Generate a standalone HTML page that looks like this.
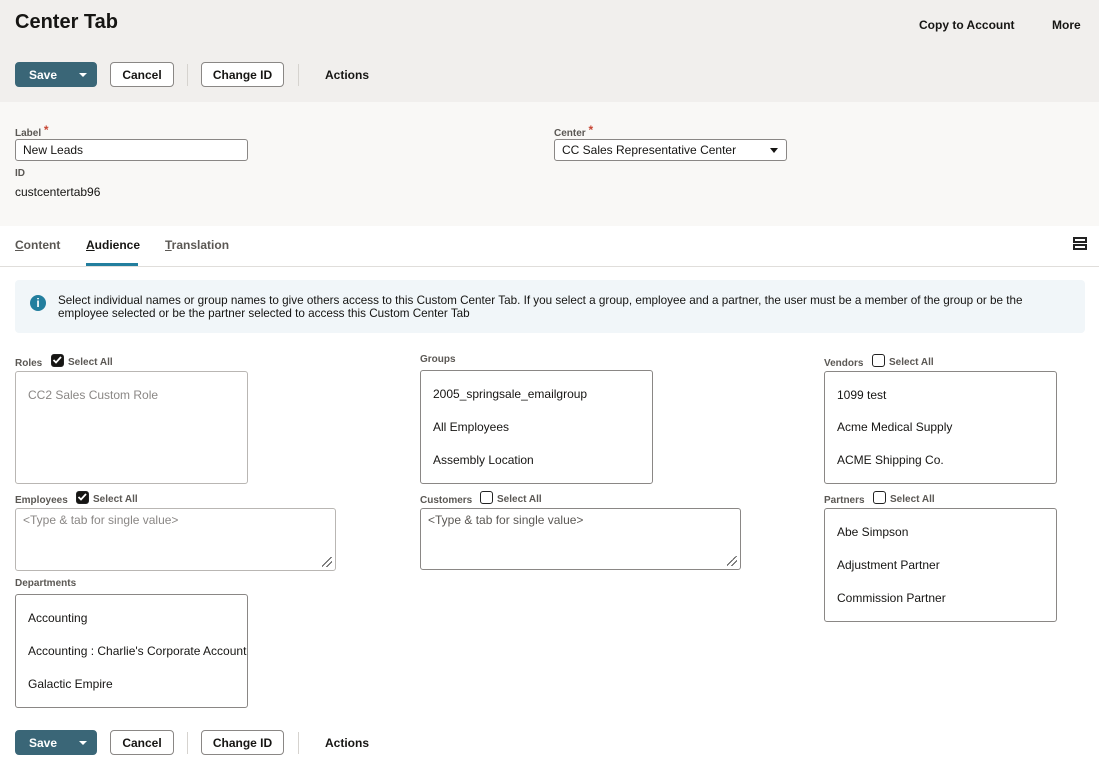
<!DOCTYPE html>
<html><head><style>
*{box-sizing:border-box;margin:0;padding:0}
body{width:1099px;height:764px;position:relative;font-family:"Liberation Sans",Arial,sans-serif;color:#161513;background:#fff;overflow:hidden}
.a{position:absolute}
.hdr{left:0;top:0;width:1099px;height:102px;background:#f1efed}
.frm{left:0;top:102px;width:1099px;height:124px;background:#f9f8f6}
.btn{position:absolute;height:25px;border:1px solid #8a8785;border-radius:4px;background:#fff;font-size:12px;font-weight:bold;display:flex;align-items:center;justify-content:center;color:#161513}
.save{background:#3a6677;border-color:#3a6677;color:#fff;justify-content:flex-start;padding-left:13px}
.div{position:absolute;width:1px;height:22px;background:#d6d3cf}
.lbl{position:absolute;font-size:10px;color:#5b5854;font-weight:bold}
.box{position:absolute;border:1px solid #b9b6b3;border-radius:3px;background:#fff;font-size:12px}
.box div{position:absolute;left:12px}
.cb{display:inline-block;width:13px;height:13px;border:1.5px solid #222;border-radius:3px;vertical-align:-2px;margin-right:4px;background:#fff}
.cb.on{background:#161513;position:relative}
.sa{position:absolute;font-size:10px;font-weight:bold;color:#5b5854}
.ta{position:absolute;border:1px solid #b9b6b3;border-radius:3px;background:#fff;font-size:12px;color:#8a8785;padding:4px 7px}
.grip{position:absolute;right:3px;bottom:3px;width:10px;height:10px;background:linear-gradient(135deg,transparent 45%,#555 45%,#555 52%,transparent 52%,transparent 70%,#555 70%,#555 77%,transparent 77%)}
</style></head><body>
<div class="a hdr"></div><div class="a frm"></div>
<div class="a" style="left:15px;top:11px;font-size:20px;font-weight:bold">Center Tab</div>
<div class="a" style="left:919px;top:18px;font-size:12px;font-weight:bold">Copy to Account</div>
<div class="a" style="left:1052px;top:18px;font-size:12px;font-weight:bold">More</div>

<div class="btn save" style="left:15px;top:62px;width:82px">Save<span style="position:absolute;left:63px;top:10px;border-left:4px solid transparent;border-right:4px solid transparent;border-top:4px solid #fff"></span></div>
<div class="btn" style="left:110px;top:62px;width:64px">Cancel</div>
<div class="div" style="left:187px;top:64px"></div>
<div class="btn" style="left:201px;top:62px;width:83px">Change ID</div>
<div class="div" style="left:298px;top:64px"></div>
<div class="a" style="left:325px;top:68px;font-size:12px;font-weight:bold">Actions</div>

<div class="lbl" style="left:15px;top:123px">Label <span style="color:#c74634;font-size:12px;vertical-align:2px">*</span></div>
<div class="box" style="left:15px;top:139px;width:233px;height:22px;border-color:#8a8785"><div style="left:7px;top:3px">New Leads</div></div>
<div class="lbl" style="left:15px;top:168px">ID</div>
<div class="a" style="left:15px;top:185px;font-size:12px">custcentertab96</div>
<div class="lbl" style="left:554px;top:123px">Center <span style="color:#c74634;font-size:12px;vertical-align:2px">*</span></div>
<div class="box" style="left:554px;top:139px;width:233px;height:22px;border-color:#8a8785"><div style="left:7px;top:3px">CC Sales Representative Center</div><span style="position:absolute;right:8px;top:8px;border-left:4px solid transparent;border-right:4px solid transparent;border-top:5px solid #161513"></span></div>

<div class="a" style="left:15px;top:238px;font-size:12px;color:#5b5854;font-weight:bold"><u>C</u>ontent</div>
<div class="a" style="left:86px;top:238px;font-size:12px;font-weight:bold"><u>A</u>udience</div>
<div class="a" style="left:86px;top:263px;width:52px;height:3px;background:#227e9e"></div>
<div class="a" style="left:165px;top:238px;font-size:12px;color:#5b5854;font-weight:bold"><u>T</u>ranslation</div>
<div class="a" style="left:0;top:266px;width:1099px;height:1px;background:#e0dedb"></div>
<div class="a" style="left:1073px;top:237px;width:14px;height:6px;border:2px solid #222"></div>
<div class="a" style="left:1073px;top:244px;width:14px;height:6px;border:2px solid #222"></div>

<div class="a" style="left:15px;top:280px;width:1070px;height:53px;background:#f1f6f9;border-radius:4px"></div>
<div class="a" style="left:30px;top:295px;width:16px;height:16px;border-radius:50%;background:#227e9e;color:#fff;font-size:12px;font-weight:bold;text-align:center;line-height:16px">i</div>
<div class="a" style="left:58px;top:294px;font-size:11.7px;line-height:13px;width:1010px">Select individual names or group names to give others access to this Custom Center Tab. If you select a group, employee and a partner, the user must be a member of the group or be the employee selected or be the partner selected to access this Custom Center Tab</div>

<div class="lbl" style="left:15px;top:358px">Roles</div>
<div class="sa" style="left:51px;top:354px"><span class="cb on"><svg width="10" height="10" style="position:absolute;left:0;top:0"><path d="M1.5 5l2.5 2.5 5-5.5" stroke="#fff" stroke-width="1.8" fill="none"/></svg></span>Select All</div>
<div class="box" style="left:15px;top:371px;width:233px;height:113px"><div style="top:16px;color:#8a8785">CC2 Sales Custom Role</div></div>

<div class="lbl" style="left:420px;top:354px">Groups</div>
<div class="box" style="left:420px;top:370px;width:233px;height:114px;border-color:#8a8785"><div style="top:16px">2005_springsale_emailgroup</div><div style="top:49px">All Employees</div><div style="top:82px">Assembly Location</div></div>

<div class="lbl" style="left:824px;top:358px">Vendors</div>
<div class="sa" style="left:872px;top:354px"><span class="cb"></span>Select All</div>
<div class="box" style="left:824px;top:371px;width:233px;height:113px;border-color:#8a8785"><div style="top:16px">1099 test</div><div style="top:48px">Acme Medical Supply</div><div style="top:81px">ACME Shipping Co.</div></div>

<div class="lbl" style="left:15px;top:495px">Employees</div>
<div class="sa" style="left:76px;top:491px"><span class="cb on"><svg width="10" height="10" style="position:absolute;left:0;top:0"><path d="M1.5 5l2.5 2.5 5-5.5" stroke="#fff" stroke-width="1.8" fill="none"/></svg></span>Select All</div>
<div class="ta" style="left:15px;top:508px;width:321px;height:63px">&lt;Type &amp; tab for single value&gt;<span class="grip"></span></div>

<div class="lbl" style="left:420px;top:495px">Customers</div>
<div class="sa" style="left:480px;top:491px"><span class="cb"></span>Select All</div>
<div class="ta" style="left:420px;top:508px;width:321px;height:62px;border-color:#8a8785;color:#5b5854">&lt;Type &amp; tab for single value&gt;<span class="grip"></span></div>

<div class="lbl" style="left:824px;top:495px">Partners</div>
<div class="sa" style="left:873px;top:491px"><span class="cb"></span>Select All</div>
<div class="box" style="left:824px;top:508px;width:233px;height:114px;border-color:#8a8785"><div style="top:16px">Abe Simpson</div><div style="top:49px">Adjustment Partner</div><div style="top:82px">Commission Partner</div></div>

<div class="lbl" style="left:15px;top:578px">Departments</div>
<div class="box" style="left:15px;top:594px;width:233px;height:114px;border-color:#8a8785;overflow:hidden"><div style="top:16px">Accounting</div><div style="top:49px;white-space:nowrap">Accounting : Charlie's Corporate Accounting</div><div style="top:82px">Galactic Empire</div></div>

<div class="btn save" style="left:15px;top:730px;width:82px">Save<span style="position:absolute;left:63px;top:10px;border-left:4px solid transparent;border-right:4px solid transparent;border-top:4px solid #fff"></span></div>
<div class="btn" style="left:110px;top:730px;width:64px">Cancel</div>
<div class="div" style="left:187px;top:732px"></div>
<div class="btn" style="left:201px;top:730px;width:83px">Change ID</div>
<div class="div" style="left:298px;top:732px"></div>
<div class="a" style="left:325px;top:736px;font-size:12px;font-weight:bold">Actions</div>
</body></html>
